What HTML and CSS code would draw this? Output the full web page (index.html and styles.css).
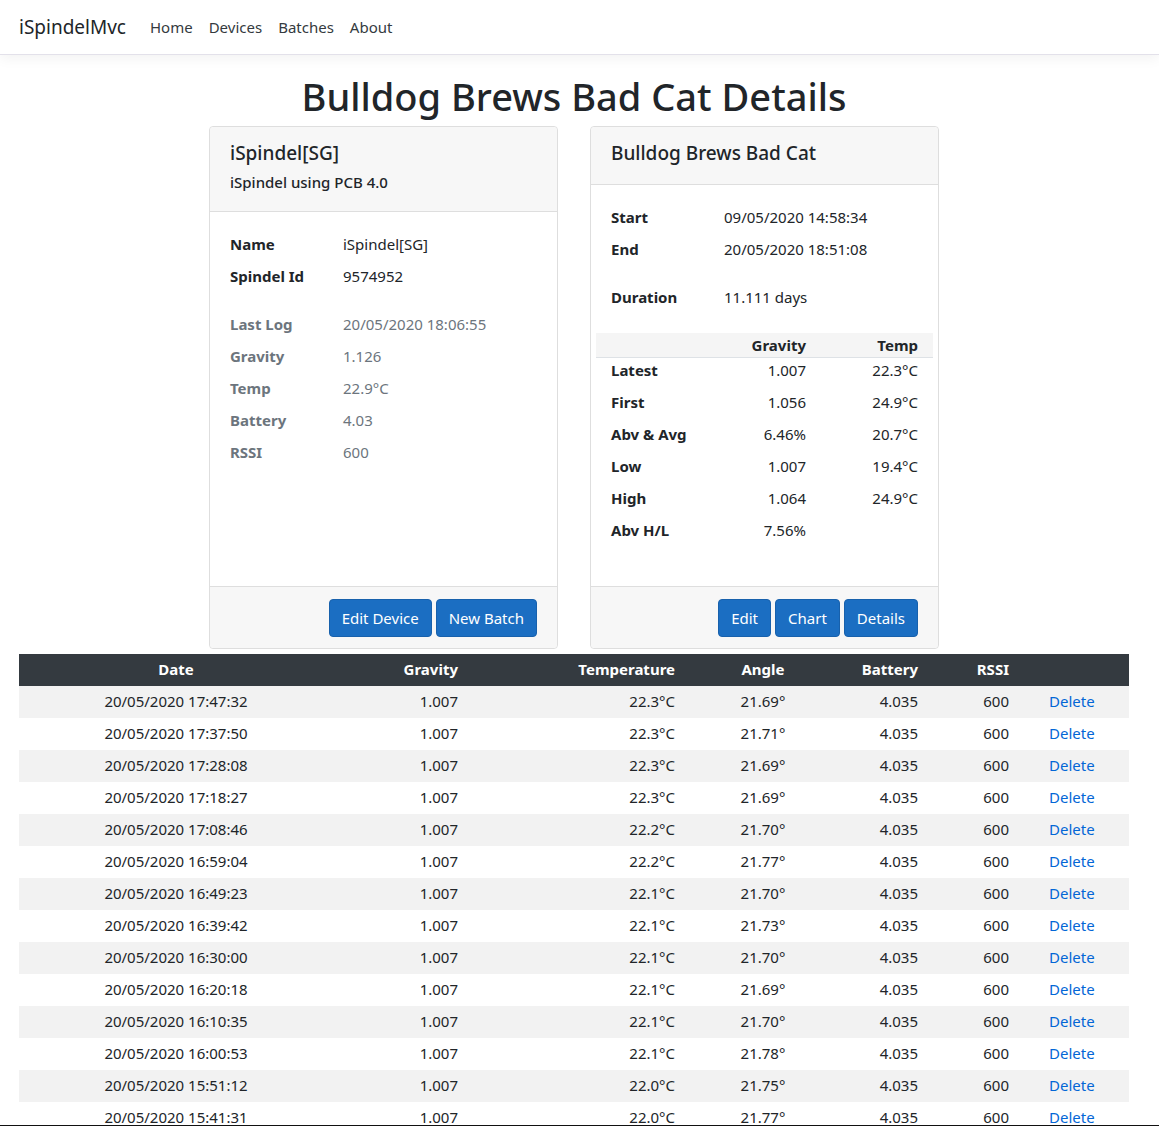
FILE: index.html
```html
<!DOCTYPE html>
<html lang="en">
<head>
<meta charset="utf-8">
<title>Bulldog Brews Bad Cat Details - iSpindelMvc</title>
<link rel="stylesheet" href="styles.css">
</head>
<body>
<header class="navbar">
  <div class="nav-inner">
    <a class="brand" href="#">iSpindelMvc</a>
    <ul class="nav-links">
      <li><a href="#">Home</a></li>
      <li><a href="#">Devices</a></li>
      <li><a href="#">Batches</a></li>
      <li><a href="#">About</a></li>
    </ul>
  </div>
</header>

<main class="container">
  <h1 class="page-title">Bulldog Brews Bad Cat Details</h1>

  <div class="cards">
    <section class="card">
      <div class="card-header">
        <h5 class="card-title">iSpindel[SG]</h5>
        <h6 class="card-subtitle">iSpindel using PCB 4.0</h6>
      </div>
      <div class="card-body">
        <dl class="info">
          <dt>Name</dt><dd>iSpindel[SG]</dd>
          <dt>Spindel Id</dt><dd>9574952</dd>
        </dl>
        <dl class="info muted">
          <dt>Last Log</dt><dd>20/05/2020 18:06:55</dd>
          <dt>Gravity</dt><dd>1.126</dd>
          <dt>Temp</dt><dd>22.9°C</dd>
          <dt>Battery</dt><dd>4.03</dd>
          <dt>RSSI</dt><dd>600</dd>
        </dl>
      </div>
      <div class="card-footer">
        <a class="btn" href="#">Edit Device</a>
        <a class="btn" href="#">New Batch</a>
      </div>
    </section>

    <section class="card">
      <div class="card-header">
        <h5 class="card-title">Bulldog Brews Bad Cat</h5>
      </div>
      <div class="card-body">
        <dl class="info">
          <dt>Start</dt><dd>09/05/2020 14:58:34</dd>
          <dt>End</dt><dd>20/05/2020 18:51:08</dd>
        </dl>
        <dl class="info">
          <dt>Duration</dt><dd>11.111 days</dd>
        </dl>
        <table class="stats">
          <thead>
            <tr><th></th><th>Gravity</th><th>Temp</th></tr>
          </thead>
          <tbody>
            <tr><th>Latest</th><td>1.007</td><td>22.3°C</td></tr>
            <tr><th>First</th><td>1.056</td><td>24.9°C</td></tr>
            <tr><th>Abv &amp; Avg</th><td>6.46%</td><td>20.7°C</td></tr>
            <tr><th>Low</th><td>1.007</td><td>19.4°C</td></tr>
            <tr><th>High</th><td>1.064</td><td>24.9°C</td></tr>
            <tr><th>Abv H/L</th><td>7.56%</td><td></td></tr>
          </tbody>
        </table>
      </div>
      <div class="card-footer">
        <a class="btn" href="#">Edit</a>
        <a class="btn" href="#">Chart</a>
        <a class="btn" href="#">Details</a>
      </div>
    </section>
  </div>

  <table class="logs">
    <colgroup>
      <col class="c-date"><col class="c-grav"><col class="c-temp"><col class="c-angle"><col class="c-batt"><col class="c-rssi"><col class="c-del">
    </colgroup>
    <thead>
      <tr><th class="center">Date</th><th>Gravity</th><th>Temperature</th><th class="center">Angle</th><th>Battery</th><th>RSSI</th><th></th></tr>
    </thead>
    <tbody>
      <tr><td class="center">20/05/2020 17:47:32</td><td>1.007</td><td>22.3°C</td><td class="center">21.69°</td><td>4.035</td><td>600</td><td class="del"><a href="#">Delete</a></td></tr>
      <tr><td class="center">20/05/2020 17:37:50</td><td>1.007</td><td>22.3°C</td><td class="center">21.71°</td><td>4.035</td><td>600</td><td class="del"><a href="#">Delete</a></td></tr>
      <tr><td class="center">20/05/2020 17:28:08</td><td>1.007</td><td>22.3°C</td><td class="center">21.69°</td><td>4.035</td><td>600</td><td class="del"><a href="#">Delete</a></td></tr>
      <tr><td class="center">20/05/2020 17:18:27</td><td>1.007</td><td>22.3°C</td><td class="center">21.69°</td><td>4.035</td><td>600</td><td class="del"><a href="#">Delete</a></td></tr>
      <tr><td class="center">20/05/2020 17:08:46</td><td>1.007</td><td>22.2°C</td><td class="center">21.70°</td><td>4.035</td><td>600</td><td class="del"><a href="#">Delete</a></td></tr>
      <tr><td class="center">20/05/2020 16:59:04</td><td>1.007</td><td>22.2°C</td><td class="center">21.77°</td><td>4.035</td><td>600</td><td class="del"><a href="#">Delete</a></td></tr>
      <tr><td class="center">20/05/2020 16:49:23</td><td>1.007</td><td>22.1°C</td><td class="center">21.70°</td><td>4.035</td><td>600</td><td class="del"><a href="#">Delete</a></td></tr>
      <tr><td class="center">20/05/2020 16:39:42</td><td>1.007</td><td>22.1°C</td><td class="center">21.73°</td><td>4.035</td><td>600</td><td class="del"><a href="#">Delete</a></td></tr>
      <tr><td class="center">20/05/2020 16:30:00</td><td>1.007</td><td>22.1°C</td><td class="center">21.70°</td><td>4.035</td><td>600</td><td class="del"><a href="#">Delete</a></td></tr>
      <tr><td class="center">20/05/2020 16:20:18</td><td>1.007</td><td>22.1°C</td><td class="center">21.69°</td><td>4.035</td><td>600</td><td class="del"><a href="#">Delete</a></td></tr>
      <tr><td class="center">20/05/2020 16:10:35</td><td>1.007</td><td>22.1°C</td><td class="center">21.70°</td><td>4.035</td><td>600</td><td class="del"><a href="#">Delete</a></td></tr>
      <tr><td class="center">20/05/2020 16:00:53</td><td>1.007</td><td>22.1°C</td><td class="center">21.78°</td><td>4.035</td><td>600</td><td class="del"><a href="#">Delete</a></td></tr>
      <tr><td class="center">20/05/2020 15:51:12</td><td>1.007</td><td>22.0°C</td><td class="center">21.75°</td><td>4.035</td><td>600</td><td class="del"><a href="#">Delete</a></td></tr>
      <tr><td class="center">20/05/2020 15:41:31</td><td>1.007</td><td>22.0°C</td><td class="center">21.77°</td><td>4.035</td><td>600</td><td class="del"><a href="#">Delete</a></td></tr>
    </tbody>
  </table>
</main>
<div class="bottom-rule"></div>
</body>
</html>
```

FILE: styles.css
```css
* { box-sizing: border-box; }

html, body {
  margin: 0;
  padding: 0;
}

body {
  font-family: "Noto Sans", "Open Sans", "DejaVu Sans", sans-serif;
  font-size: 15px;
  line-height: 1.5;
  color: #212529;
  background: #fff;
}

a { text-decoration: none; }

/* navbar */
.navbar {
  height: 55px;
  border-bottom: 1px solid #e3e1ea;
  box-shadow: 0 4px 12px rgba(0, 0, 0, 0.05);
  background: #fff;
}

.nav-inner {
  height: 54px;
  padding-left: 19px;
  display: flex;
  align-items: center;
}

.brand {
  font-size: 19px;
  color: #212529;
  margin-right: 16px;
}

.nav-links {
  list-style: none;
  display: flex;
  margin: 0;
  padding: 0;
}

.nav-links a {
  display: block;
  padding: 0 8px;
  color: #343a40;
  font-size: 15px;
}

/* main */
.container {
  width: 1110px;
  margin-left: 19px;
}

.page-title {
  margin: 19px 0 6px;
  text-align: center;
  font-size: 38px;
  font-weight: 500;
  line-height: 1.2;
}

.cards {
  display: flex;
  justify-content: center;
  gap: 32px;
}

.card {
  width: 349px;
  border: 1px solid #dedede;
  border-radius: 4px;
  display: flex;
  flex-direction: column;
  background: #fff;
}

.card-header {
  background: #f7f7f7;
  border-bottom: 1px solid #dedede;
  border-radius: 4px 4px 0 0;
  padding: 11px 20px 15px;
}

.card-title {
  margin: 0;
  font-size: 19px;
  font-weight: 500;
  line-height: 31px;
}

.card-subtitle {
  margin: 0;
  font-size: 15px;
  font-weight: 500;
  line-height: 27px;
}

.card-body {
  flex: 1;
  padding: 16px 20px 36px;
}

.info {
  display: grid;
  grid-template-columns: 113px 1fr;
  margin: 0 0 16px;
}

.info dt {
  font-weight: 700;
  line-height: 32px;
}

.info dd {
  margin: 0;
  line-height: 32px;
}

.info.muted { color: #6c757d; }

.stats {
  width: calc(100% + 30px);
  margin: 20px -15px 0;
  border-collapse: collapse;
}

.stats thead th {
  background: #f5f5f5;
  border-bottom: 1px solid #dee2e6;
  height: 25px;
  line-height: 22px;
  padding: 1px 15px 0 0;
  text-align: right;
  font-weight: 700;
}

.stats tbody th,
.stats td {
  height: 32px;
  line-height: 24px;
  padding-top: 0;
  padding-bottom: 0;
  vertical-align: top;
}

.stats tbody th {
  text-align: left;
  font-weight: 700;
  padding-left: 15px;
  width: 130px;
}

.stats td {
  text-align: right;
  padding-right: 15px;
}

.stats td:last-child { width: 112px; }

.card-footer {
  background: #f7f7f7;
  border-top: 1px solid #dedede;
  border-radius: 0 0 4px 4px;
  padding: 12px 20px 11px;
  display: flex;
  justify-content: flex-end;
  gap: 4px;
}

.btn {
  display: inline-block;
  height: 38px;
  line-height: 36px;
  padding: 0 12px;
  background: #1b6ec2;
  border: 1px solid #1861ac;
  border-radius: 4px;
  color: #fff;
  font-size: 15px;
}

/* logs table */
.logs {
  width: 1110px;
  margin-top: 5px;
  border-collapse: collapse;
  table-layout: fixed;
}

.c-date { width: 314px; }
.c-grav { width: 137px; }
.c-temp { width: 217px; }
.c-angle { width: 152px; }
.c-batt { width: 91px; }
.c-rssi { width: 91px; }
.c-del { width: 108px; }

.logs th,
.logs td {
  height: 32px;
  padding: 0 12px;
  text-align: right;
  vertical-align: middle;
  white-space: nowrap;
}

.logs thead th {
  background: #343a40;
  color: #fff;
  font-weight: 700;
}

.logs tbody tr:nth-child(odd) { background: #f2f2f2; }

.logs .center { text-align: center; }

.logs .del {
  text-align: left;
  padding-left: 28px;
}

.logs .del a { color: #0366d6; }

.bottom-rule {
  position: fixed;
  left: 0;
  right: 0;
  bottom: 1px;
  height: 1px;
  background: #111;
}
```
